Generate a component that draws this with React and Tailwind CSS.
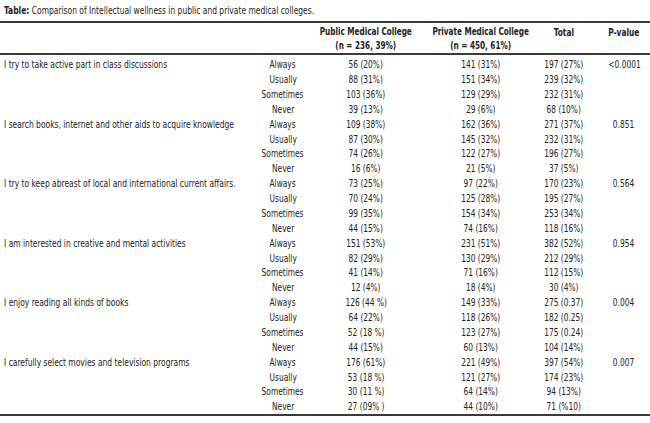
import React from "react";

const groups = [
  {
    label: "I try to take active part in class discussions",
    p: "<0.0001",
    rows: [
      ["Always", "56 (20%)", "141 (31%)", "197 (27%)"],
      ["Usually", "88 (31%)", "151 (34%)", "239 (32%)"],
      ["Sometimes", "103 (36%)", "129 (29%)", "232 (31%)"],
      ["Never", "39 (13%)", "29 (6%)", "68 (10%)"],
    ],
  },
  {
    label: "I search books, internet and other aids to acquire knowledge",
    p: "0.851",
    rows: [
      ["Always", "109 (38%)", "162 (36%)", "271 (37%)"],
      ["Usually", "87 (30%)", "145 (32%)", "232 (31%)"],
      ["Sometimes", "74 (26%)", "122 (27%)", "196 (27%)"],
      ["Never", "16 (6%)", "21 (5%)", "37 (5%)"],
    ],
  },
  {
    label: "I try to keep abreast of local and international current affairs.",
    p: "0.564",
    rows: [
      ["Always", "73 (25%)", "97 (22%)", "170 (23%)"],
      ["Usually", "70 (24%)", "125 (28%)", "195 (27%)"],
      ["Sometimes", "99 (35%)", "154 (34%)", "253 (34%)"],
      ["Never", "44 (15%)", "74 (16%)", "118 (16%)"],
    ],
  },
  {
    label: "I am interested in creative and mental activities",
    p: "0.954",
    rows: [
      ["Always", "151 (53%)", "231 (51%)", "382 (52%)"],
      ["Usually", "82 (29%)", "130 (29%)", "212 (29%)"],
      ["Sometimes", "41 (14%)", "71 (16%)", "112 (15%)"],
      ["Never", "12 (4%)", "18 (4%)", "30 (4%)"],
    ],
  },
  {
    label: "I enjoy reading all kinds of books",
    p: "0.004",
    rows: [
      ["Always", "126 (44 %)", "149 (33%)", "275 (0.37)"],
      ["Usually", "64 (22%)", "118 (26%)", "182 (0.25)"],
      ["Sometimes", "52 (18 %)", "123 (27%)", "175 (0.24)"],
      ["Never", "44 (15%)", "60 (13%)", "104 (14%)"],
    ],
  },
  {
    label: "I carefully select movies and television programs",
    p: "0.007",
    rows: [
      ["Always", "176 (61%)", "221 (49%)", "397 (54%)"],
      ["Usually", "53 (18 %)", "121 (27%)", "174 (23%)"],
      ["Sometimes", "30 (11 %)", "64 (14%)", "94 (13%)"],
      ["Never", "27 (09% )", "44 (10%)", "71 (%10)"],
    ],
  },
];

const cols = "grid grid-cols-[266px_34px_132px_98px_68px_52px]";

function C({ children }) {
  return (
    <div className="flex justify-center whitespace-nowrap">
      <span className="inline-block scale-x-[0.79] origin-center">{children}</span>
    </div>
  );
}

function L({ children }) {
  return (
    <span className="inline-block scale-x-[0.8] origin-left whitespace-nowrap">{children}</span>
  );
}

export default function App() {
  return (
    <div
      className="w-[650px] h-[423px] bg-white text-[#222] text-[10.5px] leading-none"
      style={{ fontFamily: '"DejaVu Sans Condensed", "Liberation Sans", sans-serif' }}
    >
      <div className="h-[21px] pl-[4px] pt-[5px]">
        <L>
          <span className="font-bold">Table:</span> Comparison of Intellectual wellness in public and private medical colleges.
        </L>
      </div>
      <div className="border-t-2 border-[#3a3a3a]" />
      <div className={`${cols} h-[32px] items-center font-bold leading-[14px] border-b-2 border-[#3a3a3a]`}>
        <div />
        <div />
        <div className="flex justify-center whitespace-nowrap">
          <span className="block text-center scale-x-[0.77] origin-center">
            Public Medical College
            <br />
            (n = 236, 39%)
          </span>
        </div>
        <div className="flex justify-center whitespace-nowrap">
          <span className="block text-center scale-x-[0.77] origin-center">
            Private Medical College
            <br />
            (n = 450, 61%)
          </span>
        </div>
        <div className="self-start pt-[2px]">
          <C>Total</C>
        </div>
        <div className="self-start pt-[2px]">
          <C>P-value</C>
        </div>
      </div>
      <div className="pt-[2px]">
        {groups.map((g, gi) =>
          g.rows.map((r, ri) => (
            <div key={`${gi}-${ri}`} className={`${cols} h-[14.875px] items-center`}>
              <div className="pl-[4px]">{ri === 0 ? <L>{g.label}</L> : null}</div>
              <C>{r[0]}</C>
              <C>{r[1]}</C>
              <C>{r[2]}</C>
              <C>{r[3]}</C>
              <C>{ri === 0 ? g.p : ""}</C>
            </div>
          ))
        )}
      </div>
      <div className="border-t-2 border-[#3a3a3a]" />
    </div>
  );
}
